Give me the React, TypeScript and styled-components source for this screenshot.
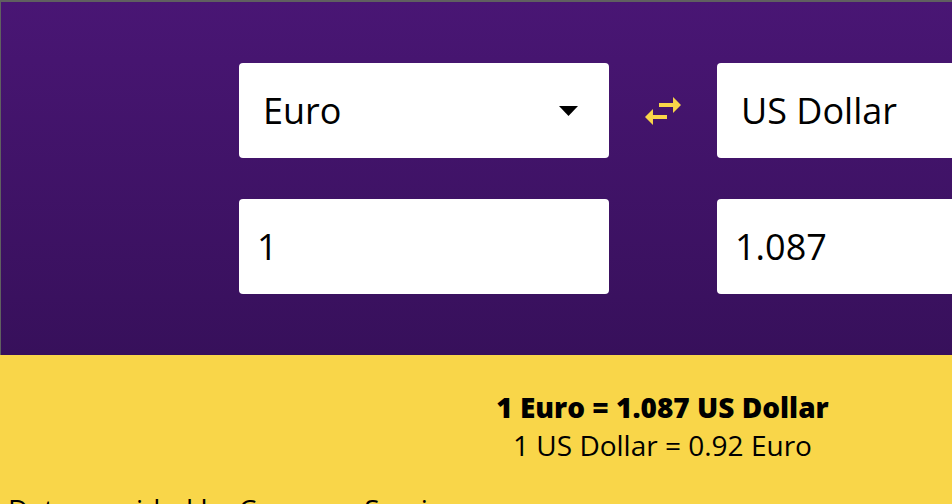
import React, { useState } from "react";
import styled, { createGlobalStyle } from "styled-components";

const GlobalStyle = createGlobalStyle`
  html, body {
    margin: 0;
    padding: 0;
    overflow: hidden;
    background: #f9d649;
  }
  body {
    font-family: "Open Sans", "Noto Sans", sans-serif;
    color: #000;
  }
  * { box-sizing: border-box; }
`;

const Page = styled.div`
  width: 1325px;
`;

const Converter = styled.section`
  background: linear-gradient(180deg, #491674 0%, #37105b 100%);
  border-top: 2px solid #606060;
  border-left: 1px solid #606060;
  padding: 61px 0;
  display: flex;
  justify-content: center;
`;

const Grid = styled.div`
  display: grid;
  grid-template-columns: 370px 108px 370px;
  grid-auto-rows: 95px;
  row-gap: 41px;
  align-items: center;
`;

const SelectWrap = styled.div`
  position: relative;
  height: 95px;
`;

const Select = styled.select`
  appearance: none;
  -webkit-appearance: none;
  width: 100%;
  height: 100%;
  border: none;
  border-radius: 4px;
  background: #fff;
  padding: 0 60px 0 24px;
  font-family: "Open Sans", "Noto Sans", sans-serif;
  font-size: 36px;
  color: #000;
  outline: none;
`;

const Caret = styled.svg`
  position: absolute;
  right: 31px;
  top: 43px;
  width: 19px;
  height: 10px;
  pointer-events: none;
`;

const SwapButton = styled.button`
  justify-self: center;
  width: 48px;
  height: 48px;
  padding: 0;
  border: none;
  background: transparent;
  cursor: pointer;
  display: flex;
  align-items: center;
  justify-content: center;
`;

const Amount = styled.input`
  width: 100%;
  height: 95px;
  border: none;
  border-radius: 4px;
  background: #fff;
  padding: 0 18px;
  font-family: "Open Sans", "Noto Sans", sans-serif;
  font-size: 36px;
  color: #000;
  outline: none;
`;

const Result = styled.section`
  background: #f9d649;
  padding: 33px 0 26px;
  text-align: center;
  font-size: 28px;
  line-height: 38px;
`;

const MainRate = styled.div`
  font-weight: 800;
`;

const InverseRate = styled.div`
  font-weight: 400;
`;

const Footer = styled.footer`
  padding: 0 8px;
  font-size: 28px;
  line-height: 38px;
`;

const currencies = ["Euro", "US Dollar", "British Pound", "Japanese Yen"];

export default function App() {
  const [from, setFrom] = useState("Euro");
  const [to, setTo] = useState("US Dollar");
  const [amount, setAmount] = useState("1");

  const caret = (
    <Caret viewBox="0 0 19 10">
      <polygon points="0,0 19,0 9.5,10" fill="#000" />
    </Caret>
  );

  return (
    <>
      <GlobalStyle />
      <Page>
        <Converter>
          <Grid>
            <SelectWrap>
              <Select value={from} onChange={(e) => setFrom(e.target.value)}>
                {currencies.map((c) => (
                  <option key={c}>{c}</option>
                ))}
              </Select>
              {caret}
            </SelectWrap>
            <SwapButton
              aria-label="Swap"
              onClick={() => {
                setFrom(to);
                setTo(from);
              }}
            >
              <svg width="48" height="48" viewBox="0 0 24 24">
                <path
                  fill="#f9d649"
                  d="M6.99 11L3 15l3.99 4v-3H14v-2H6.99v-3zM21 9l-3.99-4v3H10v2h7.01v3L21 9z"
                />
              </svg>
            </SwapButton>
            <SelectWrap>
              <Select value={to} onChange={(e) => setTo(e.target.value)}>
                {currencies.map((c) => (
                  <option key={c}>{c}</option>
                ))}
              </Select>
              {caret}
            </SelectWrap>
            <Amount value={amount} onChange={(e) => setAmount(e.target.value)} />
            <div />
            <Amount value="1.087" readOnly />
          </Grid>
        </Converter>
        <Result>
          <MainRate>1 Euro = 1.087 US Dollar</MainRate>
          <InverseRate>1 US Dollar = 0.92 Euro</InverseRate>
        </Result>
        <Footer>Data provided by Currency Services</Footer>
      </Page>
    </>
  );
}
